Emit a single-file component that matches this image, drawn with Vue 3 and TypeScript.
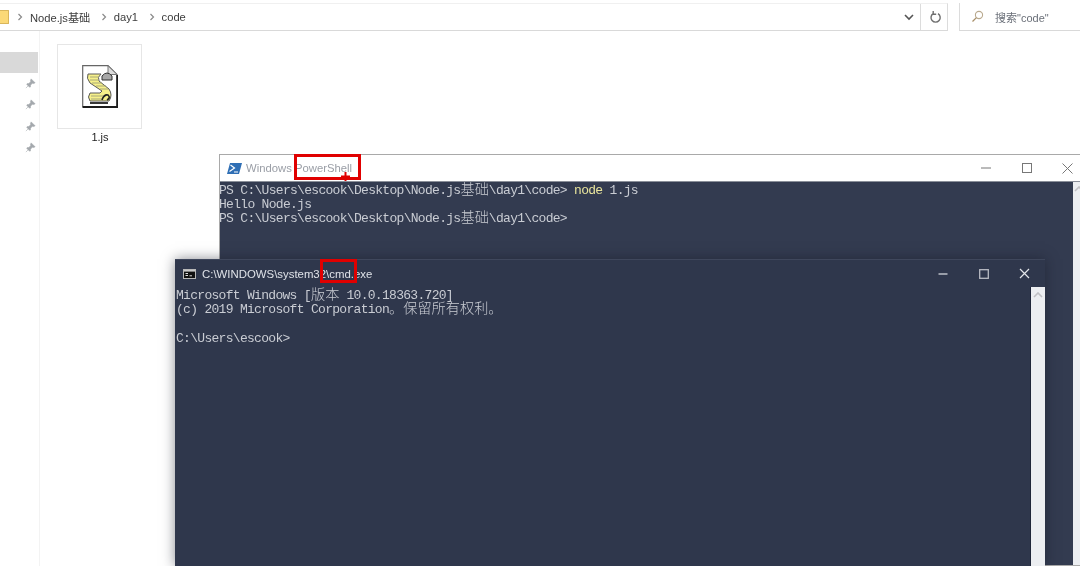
<script setup lang="ts">
const pins = [0, 1, 2, 3]
const crumbs = ['Node.js基础', 'day1', 'code']
</script>

<template>
  <div class="desktop">
    <section class="explorer">
      <header class="addressbar">
        <div class="path">
          <span class="folder"></span>
          <template v-for="c in crumbs" :key="c">
            <svg class="chev" width="6" height="8" viewBox="0 0 6 8"><path d="M1.5 1 L4.5 4 L1.5 7" fill="none" stroke="#8a8a8a" stroke-width="1.2" /></svg>
            <span class="crumb soft">{{ c }}</span>
          </template>
          <span class="spacer"></span>
          <svg class="drop" width="10" height="7" viewBox="0 0 10 7"><path d="M1 1 L5 5 L9 1" fill="none" stroke="#555" stroke-width="1.6" /></svg>
          <span class="refresh">
            <svg width="13" height="14" viewBox="0 0 13 14"><path d="M4.2 3.6 A4.6 4.6 0 1 0 9 3.6 M4.2 1 V4.2 H7.2" fill="none" stroke="#6f6f6f" stroke-width="1.4" /></svg>
          </span>
        </div>
        <div class="search">
          <svg width="13" height="13" viewBox="0 0 13 13"><circle cx="8" cy="5" r="3.6" fill="none" stroke="#b9a98e" stroke-width="1.1" /><path d="M5.4 7.6 L1.5 11.5" stroke="#a9906a" stroke-width="1.3" /></svg>
          <span class="soft">搜索"code"</span>
        </div>
      </header>
      <div class="body">
        <aside class="nav">
          <div class="nav-selected"></div>
          <div v-for="p in pins" :key="p" class="pin">
            <svg width="11" height="11" viewBox="0 0 10 10"><path d="M5.6 0.8 L9.2 4.4 L8 5 L6.6 4.8 L5 6.6 L5 8 L4.2 8.4 L1.6 5.8 L2.1 5 L3.4 5 L5.2 3.4 L5 2 Z M3 7 L0.8 9.2" fill="#a4a8ad" stroke="#a4a8ad" stroke-width="0.5" /></svg>
          </div>
        </aside>
        <div class="files">
          <figure class="file">
            <div class="thumb">
              <svg class="soft" width="36" height="43" viewBox="0 0 36 43">
                <path d="M0.7 0.7 H26 L35 9.5 V42 H0.7 Z" fill="#fff" stroke="#666" stroke-width="1.2" />
                <path d="M26 0.7 V9.5 H35 Z" fill="#dcdcdc" stroke="#777" stroke-width="1" />
                <path d="M0.7 42 H35.2 V10" fill="none" stroke="#1c1c1c" stroke-width="1.8" />
                <path d="M6 9 H19 Q15 12 17 16 L27 24 Q31 30 27 36 H8 Q5 32 8 28 H18 L20 26 L8 18 Q4 13 6 9 Z" fill="#f6f08a" stroke="#5a5a5a" stroke-width="1" />
                <path d="M8 12 H17 M8 15 H17 M10 18 H20 M14 21 H24 M18 24 H26 M9 31 H24 M9 34 H20" stroke="#a8a878" stroke-width="1" />
                <path d="M20 11 Q25 5 30 11 V15 H20 Z" fill="#a8a8a8" stroke="#333" stroke-width="1" />
                <path d="M20 35 Q22 29 26 30 Q29 33 25 35" fill="none" stroke="#222" stroke-width="1.6" />
                <path d="M8 38 H26" stroke="#222" stroke-width="1.8" />
              </svg>
            </div>
            <figcaption class="soft">1.js</figcaption>
          </figure>
        </div>
      </div>
    </section>

    <section class="ps">
      <header class="ps-title">
        <svg width="15" height="11" viewBox="0 0 15 11">
          <path d="M3 0 H15 L12 11 H0 Z" fill="#2f6fb5" />
          <path d="M3.5 2 L7.5 5 L2.5 8.5 M7 9 H11" fill="none" stroke="#fff" stroke-width="1.2" />
        </svg>
        <span class="ps-name soft">Windows PowerShell</span>
        <span class="spacer"></span>
        <span class="wbtn"><svg width="10" height="10" viewBox="0 0 10 10"><path d="M0 5 H10" stroke="#777" /></svg></span>
        <span class="wbtn"><svg width="10" height="10" viewBox="0 0 10 10"><rect x="0.5" y="0.5" width="9" height="9" fill="none" stroke="#777" /></svg></span>
        <span class="wbtn"><svg width="11" height="11" viewBox="0 0 11 11"><path d="M0.5 0.5 L10.5 10.5 M10.5 0.5 L0.5 10.5" stroke="#777" /></svg></span>
      </header>
      <div class="console ps-console">
        <div class="out soft">
          <div class="line">PS C:\Users\escook\Desktop\Node.js<span class="cjk">基础</span>\day1\code&gt; <span class="cmdword">node</span> 1.js</div>
          <div class="line">Hello Node.js</div>
          <div class="line">PS C:\Users\escook\Desktop\Node.js<span class="cjk">基础</span>\day1\code&gt;</div>
        </div>
        <div class="ps-scroll">
          <svg width="10" height="6" viewBox="0 0 10 6"><path d="M1 5 L5 1 L9 5" fill="none" stroke="#c0c0c4" stroke-width="1.6" /></svg>
        </div>
      </div>
      <div class="mark mark-ps"></div>
      <svg class="cursor" width="9" height="9" viewBox="0 0 9 9"><path d="M4.5 0 V9 M0 4.5 H9" stroke="#e00000" stroke-width="2" /></svg>
    </section>

    <section class="cmd">
      <header class="cmd-title">
        <svg width="13" height="10" viewBox="0 0 13 10">
          <rect x="0.5" y="0.5" width="12" height="9" fill="#111" stroke="#b8b8b8" />
          <rect x="1" y="1" width="11" height="1.6" fill="#c8c8c8" />
          <path d="M2.5 4.5 H5 M2.5 6.5 H5 M6.5 6.8 H9" stroke="#ddd" stroke-width="1" />
        </svg>
        <span class="cmd-name soft">C:\WINDOWS\system32\cmd.exe</span>
        <span class="spacer"></span>
        <span class="wbtn"><svg width="10" height="10" viewBox="0 0 10 10"><path d="M0.5 5 H9.5" stroke="#dfe1e6" stroke-width="1.2" /></svg></span>
        <span class="wbtn"><svg width="10" height="10" viewBox="0 0 10 10"><rect x="0.7" y="0.7" width="8.6" height="8.6" fill="none" stroke="#b8bbc3" stroke-width="1.3" /></svg></span>
        <span class="wbtn"><svg width="11" height="11" viewBox="0 0 11 11"><path d="M1 1 L10 10 M10 1 L1 10" stroke="#e4e6ea" stroke-width="1.2" /></svg></span>
      </header>
      <div class="console cmd-console">
        <div class="out soft">
          <div class="line">Microsoft Windows [<span class="cjk">版本</span> 10.0.18363.720]</div>
          <div class="line">(c) 2019 Microsoft Corporation<span class="cjk">。保留所有权利。</span></div>
          <div class="line">&nbsp;</div>
          <div class="line">C:\Users\escook&gt;</div>
        </div>
        <div class="cmd-scroll">
          <svg width="10" height="6" viewBox="0 0 10 6"><path d="M1 5 L5 1 L9 5" fill="none" stroke="#c0c0c4" stroke-width="1.6" /></svg>
        </div>
      </div>
      <div class="mark mark-cmd"></div>
    </section>
  </div>
</template>

<style>
html, body { margin: 0; padding: 0; background: #fff; overflow: hidden; }
</style>

<style scoped>
.desktop {
  position: relative;
  width: 1080px;
  height: 566px;
  overflow: hidden;
  background: #fff;
  font-family: "Liberation Sans", "Noto Sans CJK SC", sans-serif;
}
.spacer { flex: 1; }
.soft { filter: blur(0.35px); }

.explorer { display: flex; flex-direction: column; height: 100%; }
.addressbar {
  display: flex;
  height: 28px;
  margin-top: 3px;
  flex: none;
}
.path {
  display: flex; align-items: center; width: 948px;
  border-right: 1px solid #dcdcdc; border-bottom: 1px solid #d9d9d9; border-top: 1px solid #f0f0f0;
  box-sizing: border-box;
}
.folder {
  width: 9px; height: 14px; margin-right: 8px;
  background: #fbd977;
  border-radius: 0 1px 1px 0;
  border: 1px solid #d9b65b; border-left: 0;
  box-sizing: border-box;
}
.chev { margin: 0 7px 0 0; }
.crumb { font-size: 11.2px; color: #3d3d3d; margin-right: 10.5px; }
.drop { margin-right: 6px; }
.refresh {
  width: 27px; height: 100%;
  display: flex; align-items: center; justify-content: center;
  border-left: 1px solid #dcdcdc;
  padding-left: 2px; box-sizing: border-box;
}
.search {
  margin-left: 11px; flex: 1;
  display: flex; align-items: center; gap: 11px;
  padding-left: 11px;
  border-left: 1px solid #dcdcdc; border-bottom: 1px solid #d9d9d9;
  font-size: 11px; color: #6a6f78;
}

.body { flex: 1; display: flex; }
.nav { width: 40px; border-right: 1px solid #f3f3f3; box-sizing: border-box; padding-top: 21px; }
.nav-selected { width: 38px; height: 21px; background: #d9d9d9; }
.pin { height: 21.3px; display: flex; align-items: center; justify-content: flex-end; padding-right: 3px; }
.files { padding: 13px 0 0 17px; }
.file { margin: 0; display: flex; flex-direction: column; align-items: center; }
.thumb {
  width: 85px; height: 85px;
  border: 1px solid #e6e6e6; box-sizing: border-box;
  display: flex; align-items: center; justify-content: center;
}
figcaption { font-size: 11px; color: #222; margin: 2px 0 0 1px; }

.ps {
  position: absolute; left: 219px; top: 154px; width: 861px; height: 412px;
  display: flex; flex-direction: column;
  background: #fff; box-sizing: border-box;
  border: 1px solid #a9a9a9; border-right: 0;
}
.ps-title { height: 26px; display: flex; align-items: center; padding-left: 7px; background: #fff; flex: none; }
.ps-name { font-size: 11.3px; color: #9a9ea6; margin-left: 4px; }
.ps-title .wbtn { width: 41px; display: flex; justify-content: center; }
.ps-title .wbtn:last-child { margin-right: -8px; }
.console {
  font-family: "Liberation Mono", "Noto Sans CJK SC", monospace;
  font-size: 13px; letter-spacing: -0.7px;
  color: #c9ccd3;
  white-space: pre;
}
.line { height: 14.2px; line-height: 14.2px; }
.cjk { font-size: 14.2px; line-height: 0; font-family: "Noto Sans CJK SC", sans-serif; font-weight: 300; letter-spacing: 0; }
.ps-console { flex: 1; background: #333b50; display: flex; border-top: 1px solid #8a8f99; }
.out { flex: 1; }
.ps-console .out { padding-top: 1.5px; margin-left: -1px; }
.ps-scroll {
  width: 7px; background: #eceef1; overflow: hidden;
  display: flex; align-items: flex-start; padding-top: 4px; box-sizing: border-box; flex: none;
}
.ps-scroll svg { flex: none; margin-left: 1px; }
.cmdword { color: #e8e49c; }

.mark { position: absolute; border: 3px solid #e00000; box-sizing: border-box; }
.mark-ps { left: 74px; top: -1px; width: 67px; height: 26px; }
.cursor { position: absolute; left: 121px; top: 17px; }

.cmd {
  position: absolute; left: 175px; top: 259px; width: 870px; height: 307px;
  display: flex; flex-direction: column;
  background: #2f374c;
  box-shadow: 0 0 12px rgba(20, 24, 36, 0.5);
  border-top: 1px solid #3f475c; box-sizing: border-box;
}
.cmd-title { height: 27px; display: flex; align-items: center; padding-left: 8px; flex: none; }
.cmd-name { font-size: 11.4px; color: #dfe2e8; margin-left: 6px; }
.cmd-title .wbtn { width: 41px; display: flex; justify-content: center; }
.cmd-title .wbtn:first-of-type { margin-right: 0; }
.cmd-console { flex: 1; display: flex; padding-left: 1px; }
.cmd-console .out { padding-top: 2px; }
.cmd-scroll {
  width: 15px; background: #eceef1; flex: none;
  display: flex; justify-content: center; padding-top: 5px; box-sizing: border-box;
  border-left: 1px solid #20273a;
}
.cmd-scroll svg { display: block; }
.mark-cmd { left: 145px; top: -1px; width: 37px; height: 24px; }
</style>
